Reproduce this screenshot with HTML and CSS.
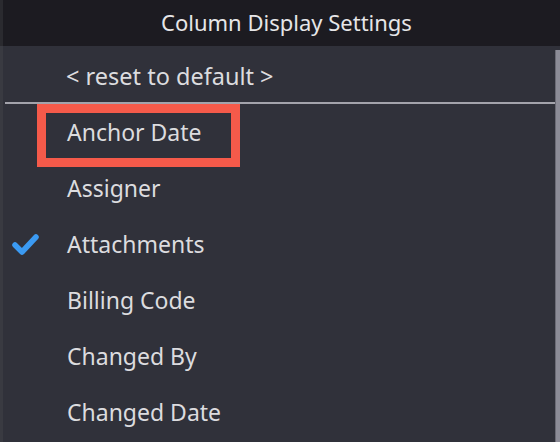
FILE: index.html
```html
<!DOCTYPE html>
<html>
<head>
<meta charset="utf-8">
<link rel="stylesheet" href="styles.css">
</head>
<body>
<div class="panel">
  <div class="header">Column Display Settings</div>
  <div class="body">
    <div class="edge"></div>
    <div class="list">
      <div class="reset">&lt; reset to default &gt;</div>
      <div class="sep"></div>
      <div class="item highlighted"><span class="label">Anchor Date</span><span class="mark"></span></div>
      <div class="item"><span class="label">Assigner</span></div>
      <div class="item checked">
        <svg class="check" width="30" height="26" viewBox="0 0 30 26"><polyline points="4,14 11,21 25,6" fill="none" stroke="#3b9af2" stroke-width="5.5" stroke-linecap="round" stroke-linejoin="round"/></svg>
        <span class="label">Attachments</span>
      </div>
      <div class="item"><span class="label">Billing Code</span></div>
      <div class="item"><span class="label">Changed By</span></div>
      <div class="item"><span class="label">Changed Date</span></div>
    </div>
    <div class="scrollbar"></div>
  </div>
</div>
</body>
</html>
```
FILE: styles.css
```css
html, body {
  margin: 0;
  padding: 0;
  background: #30313a;
}
body {
  width: 560px;
  height: 442px;
  overflow: hidden;
  font-family: "Noto Sans", "Open Sans", sans-serif;
  color: #dcdcdf;
}
.panel {
  display: flex;
  flex-direction: column;
  height: 442px;
}
.header {
  height: 46px;
  flex: none;
  background: #1c1b21;
  border-left: 3px solid #2a2a2f;
  display: flex;
  align-items: center;
  justify-content: center;
  padding-left: 10px;
  font-size: 22px;
  color: #e6e6e8;
  padding-bottom: 2px;
  box-sizing: border-box;
}
.body {
  flex: 1;
  display: flex;
}
.edge {
  width: 3px;
  background: #393a41;
  flex: none;
}
.list {
  flex: 1;
  display: flex;
  flex-direction: column;
}
.reset {
  height: 56px;
  display: flex;
  align-items: center;
  padding-left: 63px;
  padding-top: 4px;
  box-sizing: border-box;
  font-size: 23.5px;
}
.sep {
  height: 2px;
  margin-left: 2px;
  background: #a3a3ab;
}
.item {
  height: 56px;
  flex: none;
  display: flex;
  align-items: center;
  padding-left: 64px;
  font-size: 23px;
  position: relative;
}
.item .mark {
  position: absolute;
  left: 34px;
  top: 0;
  width: 185px;
  height: 45px;
  border: 9px solid #f55a4a;
}
.check {
  position: absolute;
  left: 8px;
  top: 15px;
}
.scrollbar {
  width: 4px;
  flex: none;
  margin-top: 4px;
  background: #8c8c97;
  border-left: 1px solid #6b6b75;
}
```
